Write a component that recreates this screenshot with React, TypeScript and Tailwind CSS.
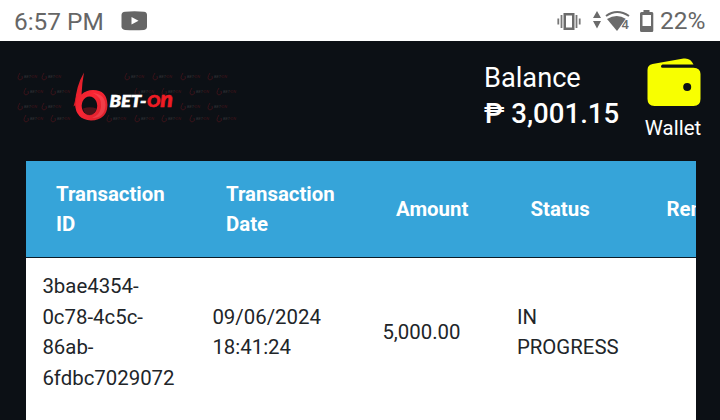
const HEADERS = ["Transaction ID", "Transaction Date", "Amount", "Status", "Remarks"];

const TRANSACTIONS = [
  {
    id: "3bae4354-0c78-4c5c-86ab-6fdbc7029072",
    date: "09/06/2024 18:41:24",
    amount: "5,000.00",
    status: "IN PROGRESS",
    remarks: "",
  },
];

// faint repeated brand pattern behind the logo
const MARKS = [
  { y: 79, xs: [17, 41, 124, 152, 180, 207] },
  { y: 94, xs: [23, 50, 134, 161, 189, 216] },
  { y: 109, xs: [17, 41, 180, 207] },
  { y: 121, xs: [23, 50, 106, 134, 161, 189, 216] },
];

const StatusBar = () => (
  <div className="flex h-[41px] shrink-0 items-center bg-white pl-[14px] text-[24px] text-[#666666]">
    <span className="w-[107px] whitespace-nowrap pt-px text-[24.4px] leading-[41px]">6:57 PM</span>
    <svg className="h-[20px] w-[27px]" viewBox="0 0 27 20">
      <path d="M4 .7Q13.500 0 23 .7Q26 1 26 4V15.500Q26 18.500 23 18.900Q13.500 19.500 4 18.900Q.5 18.500.5 15.500V4Q.5 1 4 .7Z" fill="#666" />
      <path d="M10.500 6L17.500 9.700L10.500 13.500Z" fill="white" />
    </svg>
    <svg className="ml-auto h-[32px] w-[104px]" viewBox="552 4 104 32" fill="#6b6b6b">
      <path d="M563.500 12H574.500V29H563.500ZM566 14.500V26.500H572V14.500Z" fillRule="evenodd" />
      <path d="M561.500 14V27M576.500 14V27M558.300 17.500V23.500M579.700 17.500V23.500" stroke="#777" strokeWidth="1.800" />
      <path d="M597 10L601 17H593ZM593 20H601L597 27.500Z" />
      <path d="M606 15Q617 7 629 15" fill="none" stroke="#6b6b6b" strokeWidth="2" />
      <path d="M607 18Q617 12 626 18L617 30Z" />
      <text x="621.500" y="27.500" fontSize="13" fontWeight="500" stroke="white" strokeWidth="1.500" paintOrder="stroke">4</text>
      <path d="M643.500 9H649.500V11H652Q653.300 11 653.300 12.500V29.500Q653.300 31 652 31H641.500Q640 31 640 29.500V12.500Q640 11 641.500 11H643.500ZM642.500 14V25H651V14Z" fillRule="evenodd" />
    </svg>
    <span className="w-[64px] whitespace-nowrap pl-[4px] pt-px text-[24.500px]">22%</span>
  </div>
);

const Logo = () => (
  <svg className="h-[75px] w-[230px]" viewBox="10 60 230 75">
    <defs>
      <linearGradient id="brand" x1="0" y1="0" x2="1" y2="1">
        <stop offset="0" stopColor="#d81c26" />
        <stop offset="0.500" stopColor="#fa2634" />
        <stop offset="1" stopColor="#d5202b" />
      </linearGradient>
    </defs>
    {MARKS.map((row) =>
      row.xs.map((x) => (
        <g key={`${row.y}-${x}`} opacity="0.350">
          <path d={`M${x + 3} ${row.y - 6}Q${x - 1} ${row.y} ${x + 3} ${row.y + 1}Q${x + 7} ${row.y} ${x + 5} ${row.y - 3}`} fill="none" stroke="#8d1822" />
          <text x={x + 7} y={row.y - 1} fontSize="4" fontStyle="italic" fill="#777" textLength="13">
            BET<tspan fill="#a01822">-ON</tspan>
          </text>
        </g>
      ))
    )}
    <path
      d="M84 72.500Q76 86 75 103.500Q75.500 119.500 91 120.500Q107 120 107.500 105Q107 90 93 90Q86 90 81.500 94.500Q82 83 84 72.500ZM89.500 96.500A7.800 9.300 0 1 1 89.400 96.500Z"
      fill="url(#brand)"
      fillRule="evenodd"
    />
    <path d="M93 93Q102 97 101 107Q100 115 92 118Q105 118 105.500 105Q105 94 93 93Z" fill="#ff7078" opacity="0.350" />
    <path d="M83 108.500Q90 106 96.500 108.500Q95 115 89.500 115.500Q84.500 115 83 108.500Z" fill="#8e1820" opacity="0.500" />
    <path d="M76.500 95L73.500 106.500L75.500 105Z" fill="#d81c26" />
    <g fontFamily="Lato" fontSize="17.500" fontWeight="900" fontStyle="italic" strokeWidth="0.600">
      <text x="109.500" y="106.500" fill="white" stroke="white" textLength="37" lengthAdjust="spacingAndGlyphs">BET-</text>
      <text x="147" y="106.500" fill="#ee1c24" stroke="#ee1c24" textLength="26" lengthAdjust="spacingAndGlyphs">
        O<tspan fontSize="23">n</tspan>
      </text>
    </g>
  </svg>
);

const Wallet = () => (
  <div className="flex w-[64px] flex-col items-center">
    <svg className="h-[50px] w-[56px]" viewBox="645.500 57 56 50">
      <path d="M648 70Q648 65 653 64L684 58.500Q691 57.500 694 64.500H663Q661.500 65 661.500 66.500Q661.500 67.700 663 67.700H694Q701 68 701 74V99Q701 106 694 106H655Q648 106 648 99Z" fill="#f8ff00" />
      <circle cx="687.700" cy="87" r="4" fill="#0c1015" />
    </svg>
    <span className="mt-[6px] text-[20.4px] leading-[30px]">Wallet</span>
  </div>
);

const Header = () => (
  <header className="flex h-[120px] shrink-0 items-start pl-[10px] text-white">
    <div className="pt-[19px]">
      <Logo />
    </div>
    <div className="ml-[244px] w-[157px] whitespace-nowrap pt-[19px] text-[27.2px] leading-[36px]">
      <div>Balance</div>
      <div className="text-[27.6px] font-medium">₱ 3,001.15</div>
    </div>
    <div className="pt-[16px]">
      <Wallet />
    </div>
  </header>
);

const App = () => {
  return (
    <div className="flex h-[420px] w-[720px] flex-col overflow-hidden bg-[#0c1015] font-['Roboto','Liberation_Sans',sans-serif]">
      <StatusBar />
      <Header />
      <main className="ml-[26px] w-[670px] flex-1 overflow-hidden bg-white">
        <table className="w-[816px] table-fixed border-collapse text-left text-[20.4px] leading-[30.700px] text-[#212529]">
          <colgroup>
            <col className="w-[170px]" />
            <col className="w-[170px]" />
            <col className="w-[134.500px]" />
            <col className="w-[136px]" />
            <col />
          </colgroup>
          <thead>
            <tr className="h-[96px] border-b border-[#0c1c28] bg-[#36a4d9] text-white">
              {HEADERS.map((label) => (
                <th key={label} className="px-[30px] pt-px pb-0 font-bold">
                  {label}
                </th>
              ))}
            </tr>
          </thead>
          <tbody>
            {TRANSACTIONS.map((row) => (
              <tr key={row.id} className="h-[150px]">
                <td className="px-[16.4px]">{row.id}</td>
                <td className="px-[16.4px]">{row.date}</td>
                <td className="px-[16.4px]">{row.amount}</td>
                <td className="px-[16.4px]">{row.status}</td>
                <td className="px-[16.4px]">{row.remarks}</td>
              </tr>
            ))}
          </tbody>
        </table>
      </main>
    </div>
  );
};

export default App;
